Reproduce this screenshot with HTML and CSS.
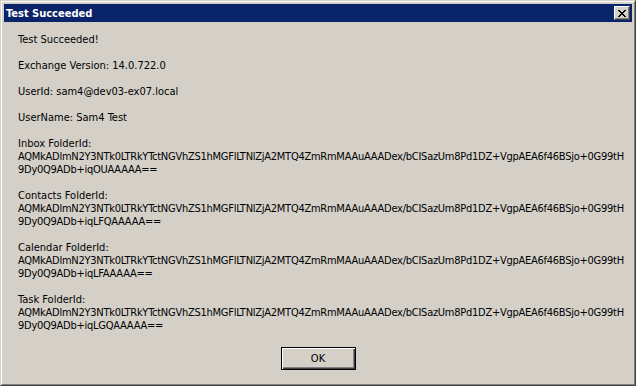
FILE: index.html
```html
<!DOCTYPE html>
<html>
<head>
<meta charset="utf-8">
<link rel="stylesheet" href="styles.css">
</head>
<body>
<div class="window">
  <div class="frame">
    <div class="titlebar">
      <span class="title">Test Succeeded</span>
      <span class="close">
        <svg width="8" height="7" viewBox="0 0 8 7"><path d="M0 0h2v1h-2zM6 0h2v1h-2zM1 1h2v1h-2zM5 1h2v1h-2zM2 2h4v1h-4zM3 3h2v1h-2zM2 4h4v1h-4zM1 5h2v1h-2zM5 5h2v1h-2zM0 6h2v1h-2zM6 6h2v1h-2z" fill="#000"/></svg>
      </span>
    </div>
    <div class="content">
      <div class="text">
        <p>Test Succeeded!</p>
        <p>Exchange Version: 14.0.722.0</p>
        <p>UserId: sam4@dev03-ex07.local</p>
        <p>UserName: Sam4 Test</p>
        <p>Inbox FolderId:<br><span class="id">AQMkADlmN2Y3NTk0LTRkYTctNGVhZS1hMGFlLTNlZjA2MTQ4ZmRmMAAuAAADex/bCISazUm8Pd1DZ+VgpAEA6f46BSjo+0G99tH</span><br><span class="id">9Dy0Q9ADb+iqOUAAAAA==</span></p>
        <p>Contacts FolderId:<br><span class="id">AQMkADlmN2Y3NTk0LTRkYTctNGVhZS1hMGFlLTNlZjA2MTQ4ZmRmMAAuAAADex/bCISazUm8Pd1DZ+VgpAEA6f46BSjo+0G99tH</span><br><span class="id">9Dy0Q9ADb+iqLFQAAAAA==</span></p>
        <p>Calendar FolderId:<br><span class="id">AQMkADlmN2Y3NTk0LTRkYTctNGVhZS1hMGFlLTNlZjA2MTQ4ZmRmMAAuAAADex/bCISazUm8Pd1DZ+VgpAEA6f46BSjo+0G99tH</span><br><span class="id">9Dy0Q9ADb+iqLFAAAAA==</span></p>
        <p>Task FolderId:<br><span class="id">AQMkADlmN2Y3NTk0LTRkYTctNGVhZS1hMGFlLTNlZjA2MTQ4ZmRmMAAuAAADex/bCISazUm8Pd1DZ+VgpAEA6f46BSjo+0G99tH</span><br><span class="id">9Dy0Q9ADb+iqLGQAAAAA==</span></p>
      </div>
      <div class="buttons">
        <button class="btn">OK</button>
      </div>
    </div>
  </div>
</div>
</body>
</html>
```
FILE: styles.css
```css
html, body {
  margin: 0;
  padding: 0;
  background: #d4d0c8;
}
.window {
  width: 636px;
  height: 386px;
  box-sizing: border-box;
  border: 1px solid;
  border-color: #d4d0c8 #404040 #404040 #d4d0c8;
  font-family: "DejaVu Sans Condensed", "DejaVu Sans", sans-serif;
  font-size: 11px;
  color: #000;
  overflow: hidden;
}
.frame {
  height: 100%;
  box-sizing: border-box;
  border: 1px solid;
  border-color: #ffffff #808080 #808080 #ffffff;
  padding: 2px;
  display: flex;
  flex-direction: column;
}
.titlebar {
  height: 18px;
  background: #0a246a;
  display: flex;
  align-items: center;
  justify-content: space-between;
  padding: 0 2px 0 2px;
}
.title {
  color: #fff;
  font-weight: bold;
  font-size: 11px;
}
.close {
  width: 16px;
  height: 14px;
  box-sizing: border-box;
  background: #d4d0c8;
  border: 1px solid;
  border-color: #ffffff #404040 #404040 #ffffff;
  box-shadow: inset -1px -1px 0 #808080;
  display: flex;
  align-items: center;
  justify-content: center;
}
.close svg {
  display: block;
  margin: 0 1px 0 0;
}
.content {
  flex: 1;
  display: flex;
  flex-direction: column;
  padding: 11px 0 0 14px;
}
.text p {
  margin: 0 0 13px 0;
  line-height: 13px;
  white-space: nowrap;
}
.text p:last-child {
  margin-bottom: 0;
}
.id {
  letter-spacing: -0.26px;
}
.buttons {
  display: flex;
  justify-content: center;
  margin-top: 15px;
  padding-right: 14px;
}
.btn {
  width: 75px;
  height: 23px;
  box-sizing: border-box;
  background: #d4d0c8;
  font-family: inherit;
  font-size: 11px;
  color: #000;
  border: 1px solid #000;
  box-shadow: inset 1px 1px 0 #ffffff, inset -1px -1px 0 #404040, inset -2px -2px 0 #808080;
  padding: 0;
  margin: 0;
}
```
